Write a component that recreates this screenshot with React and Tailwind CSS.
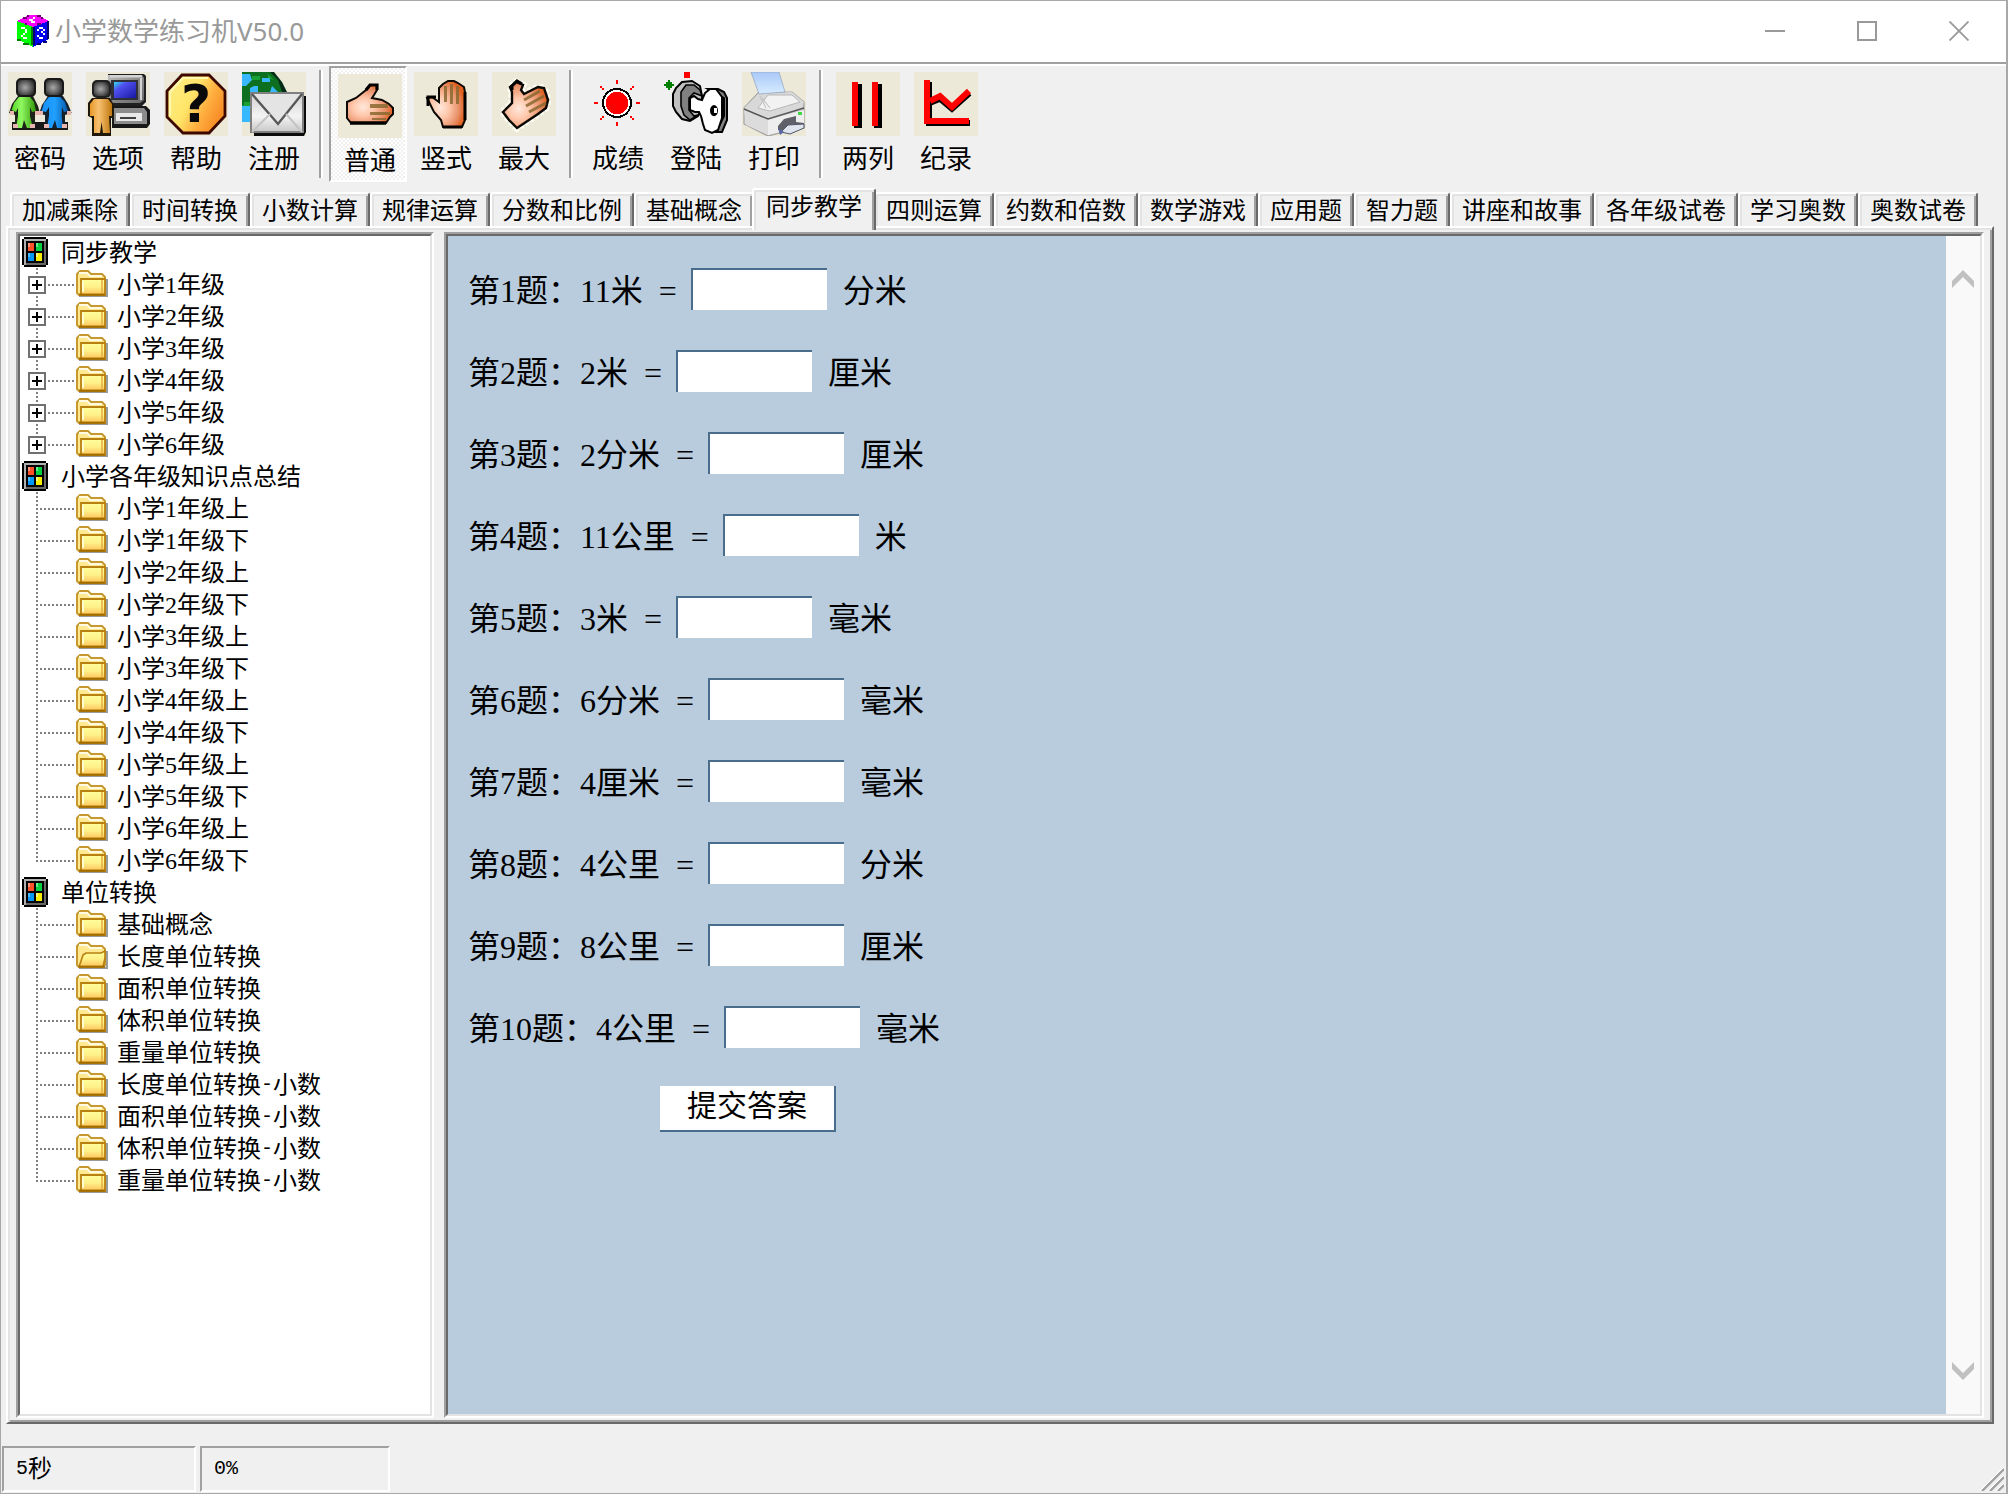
import React from "react";

const pixel = { shapeRendering: "crispEdges" };

function DiceIcon() {
  return (
    <svg viewBox="0 0 16 16" className="h-8 w-8 shrink-0" aria-hidden="true" style={pixel}>
      <path d="M0 3L4 1L6 0H10L12 1L16 3L8 6Z" fill="#ff00ff" />
      <path d="M0 3L8 6V16L6 15L0 12Z" fill="#00ff00" />
      <path d="M16 3L8 6V16L10 15L16 12Z" fill="#0000f0" />
      <path d="M6 2h2v1h-2zM7 3h2v1h-2zM8 1h1v1h-1z" fill="#fff" />
      <path d="M3 1h2v1h-2zM5 0h1v1h-1zM10 0h2v1h-2zM12 1h1v1h-1zM4 4h1v1h-1zM10 4h2v1h-2z" fill="#700070" />
      <path d="M2 6h2v1h-2zM4 7h1v2h-1zM3 9h1v1h-1zM2 10h1v1h-1zM3 11h2v1h-2z" fill="#fff" />
      <path d="M11 6h2v1h-2zM10 7h1v1h-1zM13 7h1v1h-1zM12 8h1v1h-1zM13 9h1v1h-1zM10 10h1v1h-1zM11 11h2v1h-2z" fill="#fff" />
      <path d="M7 6h1v9h-1zM0 12h2v1h-2zM3 14h3v1h-3z" fill="#008000" />
      <path d="M8 6h1v9h-1zM15 3h1v9h-1zM13 13h2v1h-2zM10 14h2v1h-2z" fill="#000070" />
    </svg>
  );
}

function IconDefs() {
  return (
    <svg className="absolute h-0 w-0" aria-hidden="true">
      <defs>
        <radialGradient id="head" cx="0.45" cy="0.5" r="0.6">
          <stop offset="0" stopColor="#a8a8a8" />
          <stop offset="0.5" stopColor="#686868" />
          <stop offset="1" stopColor="#202020" />
        </radialGradient>
        <linearGradient id="green"><stop offset="0" stopColor="#58d828" /><stop offset="0.4" stopColor="#90f860" /><stop offset="1" stopColor="#309808" /></linearGradient>
        <linearGradient id="blue"><stop offset="0" stopColor="#1890f8" /><stop offset="0.5" stopColor="#20a0ff" /><stop offset="1" stopColor="#0858a8" /></linearGradient>
        <linearGradient id="orange"><stop offset="0" stopColor="#e89828" /><stop offset="0.4" stopColor="#f8c070" /><stop offset="1" stopColor="#c07810" /></linearGradient>
        <linearGradient id="screen" x1="0" y1="0" x2="1" y2="1"><stop offset="0" stopColor="#30e0e8" /><stop offset="0.3" stopColor="#5050f0" /><stop offset="1" stopColor="#1818a0" /></linearGradient>
        <linearGradient id="metal" x1="0" y1="0" x2="1" y2="1"><stop offset="0" stopColor="#c0c0c0" /><stop offset="0.5" stopColor="#8a8a8a" /><stop offset="1" stopColor="#686868" /></linearGradient>
        <linearGradient id="gold" x1="0" y1="0" x2="1" y2="0.5"><stop offset="0" stopColor="#fff088" /><stop offset="0.5" stopColor="#ffe468" /><stop offset="0.75" stopColor="#ffb040" /><stop offset="1" stopColor="#f89028" /></linearGradient>
        <linearGradient id="envelope" x1="0" y1="0" x2="0" y2="1"><stop offset="0" stopColor="#d0d0d0" /><stop offset="0.6" stopColor="#f4f4f4" /><stop offset="1" stopColor="#c8c8c8" /></linearGradient>
        <radialGradient id="skin" cx="0.35" cy="0.58" r="0.65">
          <stop offset="0" stopColor="#ffe8dc" />
          <stop offset="0.35" stopColor="#ffc8ac" />
          <stop offset="0.75" stopColor="#e89068" />
          <stop offset="1" stopColor="#e06020" />
        </radialGradient>
        <linearGradient id="paper" x1="0" y1="0" x2="0" y2="1"><stop offset="0" stopColor="#a8c8f8" /><stop offset="1" stopColor="#d8ecff" /></linearGradient>
        <linearGradient id="printer" x1="0" y1="0" x2="1" y2="1"><stop offset="0" stopColor="#f4f4f4" /><stop offset="1" stopColor="#c0c0c0" /></linearGradient>
        <linearGradient id="folder" x1="0" y1="0" x2="0" y2="1"><stop offset="0" stopColor="#ffff9c" /><stop offset="0.5" stopColor="#fff088" /><stop offset="1" stopColor="#ffc058" /></linearGradient>
      </defs>
    </svg>
  );
}

function ToolIcon({ plain, children }) {
  return (
    <svg viewBox="0 0 32 32" className={plain ? "h-16 w-16" : "h-16 w-16 bg-[#ece9d8]"} aria-hidden="true">
      {children}
    </svg>
  );
}

function PasswordIcon() {
  return (
    <ToolIcon>
      <path d="M2 25H30V29H2Z" fill="#181818" />
      <path d="M5 12H12.500L15 17L16 21H13.500V28H3.500V21.500L0.500 20.500L2 16Z" fill="#1c2418" />
      <path d="M5.500 12.500H11L13 15L14 19.500L12 20L11 17.500V22L12.500 28H9.500L8 24L7 28H4L5 22V18L4 20L1.800 19L3 15.500Z" fill="url(#green)" />
      <path d="M20 12H27.500L30 16L31.800 20.500L28.500 21.500V28H18.500V21.500L15.500 21L17 16.500Z" fill="#14202c" />
      <path d="M20.500 12.500H26L28.500 15L30 19.500L28 20L27 17.500L26.800 22L27.500 28H24.500L23.500 24L22 28H19.500L20.500 22V17.500L19 20L16.800 19.500L18 15.500Z" fill="url(#blue)" />
      <path d="M1 19.500h2v2H1zM13.500 19.500h2v2H13.500zM15.500 19.500h2v2H15.500zM29.500 19.500h2v2H29.500zM2.500 26h2.500v2H2.500zM11 26h2.500v2H11zM18 26h2.500v2H18zM27 26h2.500v2H27z" fill="#e8b8b0" />
      <rect x="4.500" y="3.500" width="9" height="8.500" rx="2" fill="url(#head)" stroke="#181818" />
      <rect x="18.500" y="3.500" width="9" height="8.500" rx="2" fill="url(#head)" stroke="#181818" />
    </ToolIcon>
  );
}

function OptionsIcon() {
  return (
    <ToolIcon>
      <path d="M11 1H29L30 2V15L28 17H13L11 15Z" fill="#202020" />
      <path d="M11 1.500H28L29 3V14L27 15.500H13L11 13Z" fill="url(#metal)" />
      <path d="M12 1.500H28V2.800H12ZM27 3H28V14H27Z" fill="#d4d4d4" />
      <rect x="12.500" y="4" width="13.500" height="10" fill="#303038" />
      <rect x="14" y="5" width="11" height="8" fill="url(#screen)" />
      <path d="M13 17H30L32 19V26L30.500 28H13Z" fill="#181818" />
      <path d="M14 18H29L30.500 20V26H14Z" fill="#8c8c8c" />
      <path d="M15 20.500H28V24.500H15Z" fill="#e8e8e8" />
      <path d="M17 22.500H25V23.500H17Z" fill="#404040" />
      <path d="M3 13H12L14 16.500V23H12.500V32H3V23L1 22V15.500Z" fill="#201808" />
      <path d="M4 13.500H11L13 16V22H11.500L12 30.500H8.500L7.800 25L7 30.500H4V22H2V16Z" fill="url(#orange)" />
      <rect x="3.500" y="4.500" width="8.500" height="8" rx="2" fill="url(#head)" stroke="#202020" />
    </ToolIcon>
  );
}

function HelpIcon() {
  return (
    <ToolIcon>
      <path d="M9 1.500H22.500L30.500 9.500V22L22.500 30.500H9.500L1.500 22.500V9.500Z" fill="url(#gold)" stroke="#3c0800" strokeWidth="1.400" />
      <path d="M3 22V10L9.500 3H22" stroke="#fff8b0" fill="none" />
      <text x="16" y="25" textAnchor="middle" fontFamily="DejaVu Sans" fontWeight="bold" fontSize="26" fill="#0a0a0a">?</text>
    </ToolIcon>
  );
}

function RegisterIcon() {
  return (
    <ToolIcon>
      <path d="M0 0H16L20 5L23 11V25H0Z" fill="#052c18" />
      <path d="M0 0H14L18 4L20 10H8L4 14V18H0Z" fill="#0c7020" />
      <path d="M0 1H4L5 4L2 7H0ZM10 3H14V5H10ZM6 7H8V10H4V8ZM15 7L18 10H14ZM0 17L4 16V25H0Z" fill="#38b8ff" />
      <path d="M1 15H4V17H1ZM5 2H9V4H5ZM13 1L16 4L13 3Z" fill="#18a030" />
      <path d="M6 12H32V30L31 32H6Z" fill="#0c0c0c" />
      <rect x="4.500" y="10.500" width="26" height="19.500" fill="url(#envelope)" stroke="#808080" />
      <path d="M5 11L18 26L30 11" fill="#e4e4e4" stroke="#585858" strokeWidth="1.200" />
      <path d="M5 30L14 21M30 30L22 21" stroke="#c4c4c4" />
    </ToolIcon>
  );
}

function NormalIcon() {
  return (
    <ToolIcon>
      <path d="M4.500 14L9 12L14 8L16 5.500H19.500V8L18 10.500L17 12L22 13L25.500 15L27.500 17V20L26 21.500L24 24.500H6.500L4.500 22Z" fill="url(#skin)" stroke="#0c0804" strokeWidth="1" />
      <path d="M16 15H25V17H16ZM16 19H26V20.500H16ZM17 22H24V23H17Z" fill="#8a6830" opacity="0.850" />
      <path d="M14 8L16 5.500H19.500V8" fill="none" stroke="#000" strokeWidth="1.600" />
      <path d="M6 24.500H24" stroke="#000" strokeWidth="1.800" />
    </ToolIcon>
  );
}

function VerticalIcon() {
  return (
    <ToolIcon>
      <path d="M6.500 13L9 12.500L12.500 15V8L14.500 6L17 4.500H20L22 5.500L25 7.500L25.500 10V24L24 27.500H14.500L13.500 24L10 20L8.500 17Z" fill="url(#skin)" stroke="#0c0804" strokeWidth="1" />
      <path d="M15 7H16.500V15H15ZM18 6H19.500V16H18ZM21 7H22.500V16H21Z" fill="#8a6830" opacity="0.850" />
      <path d="M14.500 27.500H24M25.500 10V24M7 17V12.500H11" stroke="#000" strokeWidth="1.500" fill="none" />
    </ToolIcon>
  );
}

function MaximizeIcon() {
  return (
    <ToolIcon>
      <path d="M5.500 20L10 15.500V10L9 7.500L12 5L15.500 6.500L14.500 9L16 11L23 7.500L26 8L27 11L28 14L27 18L23 21L12.500 28L8.500 24Z" fill="none" stroke="#fffef4" strokeWidth="3.500" strokeDasharray="2 1" />
      <path d="M5.500 20L10 15.500V10L9 7.500L12 5L15.500 6.500L14.500 9L16 11L23 7.500L26 8L27 11L28 14L27 18L23 21L12.500 28L8.500 24Z" fill="url(#skin)" stroke="#0c0804" strokeWidth="1.200" />
      <path d="M16 14L24 9.500M17 17L26 12M18.500 20L27 15.500" stroke="#8a6830" strokeWidth="1.500" opacity="0.850" />
      <path d="M10 9V7L12.500 4.500L15 6" stroke="#000" strokeWidth="1.500" fill="none" />
    </ToolIcon>
  );
}

function ScoreIcon() {
  return (
    <ToolIcon plain>
      <circle cx="15.500" cy="15.500" r="7" fill="#fff" stroke="#000" style={pixel} />
      <circle cx="15.500" cy="15.500" r="5.600" fill="#f00" style={pixel} />
      <g fill="#f00" style={pixel}>
        <path d="M15 4h1v2h-1zM15 25h1v2h-1zM4 15h2v1h-2zM25 15h2v1h-2z" />
        <path d="M7 7h1v1h-1zM8 8h1v1h-1zM23 7h1v1h-1zM22 8h1v1h-1zM7 23h1v1h-1zM8 22h1v1h-1zM23 23h1v1h-1zM22 22h1v1h-1z" />
      </g>
    </ToolIcon>
  );
}

function LoginIcon() {
  return (
    <ToolIcon plain>
      <path d="M10 0h3v3h-3z" fill="#f00" />
      <path d="M2 4h1v1h1v1h1v1h-1v1h-1v1h-1v-1h-1v-1h-1v-1h1v-1h1z" fill="#008000" style={pixel} />
      <path d="M9 5L14 4.500L18 7L19 12V18L17 22L13 24.500L9 23.500L6 20L4.500 17V11L6 8Z" fill="#c0c0c0" stroke="#000" />
      <path d="M11 6.500H15L18 9L19 12L15 10.500L12.500 13V19L15 22L17 21.500L13 24L10 21.500L8.500 17L8.500 10Z" fill="#808080" stroke="#000" strokeWidth="0.800" />
      <path d="M22 8.500H27L30 10L31.500 13V24L29 30H26L30 22V13Z" fill="#808080" stroke="#000" />
      <path d="M13 13L15 12L17 13.500L19 14L20.500 10.500L23 8.500H26L29 12.500V23L27 29L24 30.500L20.500 29L19.500 26L18.500 22L17.500 20L15.500 20L13 19Z" fill="#fff" stroke="#000" />
      <ellipse cx="25" cy="19.300" rx="2" ry="2.800" fill="#000" />
      <path d="M25 18h1.500v2.500H25z" fill="#fff" />
    </ToolIcon>
  );
}

function PrintIcon() {
  return (
    <ToolIcon>
      <path d="M1 18L8 10.500L25 10L31 15V28L21 30L13 32L1 26Z" fill="url(#printer)" stroke="#a0a0a0" strokeWidth="0.600" />
      <path d="M1 18L8 11L25 10L31 15L29 19L13 22.500Z" fill="#d8d8d8" />
      <path d="M8 18L13 11.500H25L29 15L14 19.500Z" fill="#f2f2f2" stroke="#b8b8b8" strokeWidth="0.500" />
      <path d="M9 12L12 18M10 13L14 18" stroke="#c4c4c4" strokeWidth="0.600" />
      <path d="M4.500 0H18.500L21.500 10L8.500 11Z" fill="url(#paper)" stroke="#98a8c0" strokeWidth="0.400" />
      <path d="M1 19L13 24V31.500L2 26.500Z" fill="#dcdcdc" />
      <path d="M13 24L31 19V27L13 31.500Z" fill="#eeeeee" />
      <path d="M1 18.500L13 23.500L31 18" fill="none" stroke="#585858" strokeWidth="0.800" />
      <path d="M18 27L21 23.500L27 22V25L31 25.500V27L24 30L18 29Z" fill="#606068" />
      <path d="M19.500 30L23 26.500L31 26L31 28L24 31Z" fill="#dfe3ee" stroke="#505868" strokeWidth="0.500" />
      <path d="M18 28L21 30L19 31.500Z" fill="#5868a0" />
      <path d="M28 20h2v1.500h-2z" fill="#40d840" />
    </ToolIcon>
  );
}

function ColumnsIcon() {
  return (
    <ToolIcon>
      <path d="M9 6H13V28H9ZM19 6H23V28H19Z" fill="#000" />
      <path d="M8 5H11V27H8ZM18 5H21V27H18Z" fill="#f00" />
    </ToolIcon>
  );
}

function RecordIcon() {
  return (
    <ToolIcon>
      <g fill="none" strokeWidth="3">
        <path d="M7.500 5V25.500H28" stroke="#000" />
        <path d="M8 16L13 14L19 19L28 11" stroke="#000" strokeWidth="2" />
        <path d="M6.500 4V24.500H27.500" stroke="#f00" />
        <path d="M8 14.500L13 12L19 17.500L27.500 9.500" stroke="#f00" />
      </g>
    </ToolIcon>
  );
}

const toolGroups = [
  [["密码", PasswordIcon], ["选项", OptionsIcon], ["帮助", HelpIcon], ["注册", RegisterIcon]],
  [["普通", NormalIcon], ["竖式", VerticalIcon], ["最大", MaximizeIcon]],
  [["成绩", ScoreIcon], ["登陆", LoginIcon], ["打印", PrintIcon]],
  [["两列", ColumnsIcon], ["纪录", RecordIcon]],
];

const tabs = ["加减乘除", "时间转换", "小数计算", "规律运算", "分数和比例", "基础概念", "同步教学", "四则运算", "约数和倍数", "数学游戏", "应用题", "智力题", "讲座和故事", "各年级试卷", "学习奥数", "奥数试卷"];

const tree = [
  { label: "同步教学", expandable: true, items: ["小学1年级", "小学2年级", "小学3年级", "小学4年级", "小学5年级", "小学6年级"] },
  {
    label: "小学各年级知识点总结",
    items: ["小学1年级上", "小学1年级下", "小学2年级上", "小学2年级下", "小学3年级上", "小学3年级下", "小学4年级上", "小学4年级下", "小学5年级上", "小学5年级下", "小学6年级上", "小学6年级下"],
  },
  {
    label: "单位转换",
    items: ["基础概念", "长度单位转换", "面积单位转换", "体积单位转换", "重量单位转换", "长度单位转换-小数", "面积单位转换-小数", "体积单位转换-小数", "重量单位转换-小数"],
  },
];

const questions = [
  ["11米", "分米"],
  ["2米", "厘米"],
  ["2分米", "厘米"],
  ["11公里", "米"],
  ["3米", "毫米"],
  ["6分米", "毫米"],
  ["4厘米", "毫米"],
  ["4公里", "分米"],
  ["8公里", "厘米"],
  ["4公里", "毫米"],
];

function ToolButton({ label, Icon, pressed }) {
  return (
    <button
      type="button"
      aria-pressed={pressed}
      className={
        pressed
          ? "flex h-[116px] w-[78px] flex-col items-center border-2 border-t-[#a0a0a0] border-l-[#a0a0a0] border-r-white border-b-white bg-[conic-gradient(#fff_25%,#f0f0f0_0_50%,#fff_0_75%,#f0f0f0_0)] bg-[length:4px_4px] pt-1.5 pl-1"
          : "flex h-[116px] w-[78px] flex-col items-center pt-1.5"
      }
    >
      <Icon />
      <span className="mt-[3px] text-[26px] leading-9">{label}</span>
    </button>
  );
}

function RootIcon() {
  return (
    <svg viewBox="0 0 13 15" className="h-[30px] w-[26px] shrink-0" aria-hidden="true" style={pixel}>
      <path d="M1 0H12V1H13V14H12V15H1V14H0V1H1Z" fill="#000" />
      <path d="M1 1H12V14H1Z" fill="#686868" />
      <path d="M1 1H12V2H1ZM1 1H2V14H1Z" fill="#b0b0b0" />
      <path d="M2 2H11V13H2Z" fill="#000" />
      <path d="M3 3h3v4h-3z" fill="#ff5028" />
      <path d="M3 3h1v2h-1z" fill="#ff9878" />
      <path d="M7 3h3v4h-3z" fill="#00d040" />
      <path d="M7 3h1v2h-1z" fill="#60f090" />
      <path d="M3 8h3v4h-3z" fill="#0098f8" />
      <path d="M3 8h1v2h-1z" fill="#50b8ff" />
      <path d="M7 8h3v4h-3z" fill="#f8f000" />
      <path d="M7 8h1v2h-1z" fill="#fff880" />
    </svg>
  );
}

function FolderIcon({ open }) {
  return (
    <svg viewBox="0 0 16 14" className="h-7 w-8 shrink-0" aria-hidden="true">
      <path d="M1.500 12.500H15V4.500H16V13.500H1.500Z" fill="#707070" opacity="0.700" />
      <path d="M0.500 2L2 0.500H6L7.500 2H13L14.500 3.500V11.500L13.500 12.500H1.500L0.500 11.500Z" fill="#ffe890" stroke="#c89830" />
      <path d="M1.500 1.500H5.500L7 3H13" stroke="#fffbe0" fill="none" />
      {open ? (
        <path d="M3.500 6.500L5 5.500H12.500L14.500 4.500V8L13.500 12.500H1.500Z" fill="url(#folder)" stroke="#b88010" strokeWidth="0.800" />
      ) : (
        <>
          <path d="M2.500 4.500H14.500V12.500H2.500Z" fill="url(#folder)" stroke="#b88010" strokeWidth="0.900" />
          <path d="M3.500 5.500V11" stroke="#fffcd0" />
          <path d="M13 5V12" stroke="#e8b040" strokeWidth="0.800" />
        </>
      )}
      <path d="M1.500 12.300H14.500" stroke="#a06c00" />
    </svg>
  );
}

function Connector({ last }) {
  return (
    <svg viewBox="0 0 56 32" className="h-8 w-14 shrink-0" aria-hidden="true" fill="none" stroke="#808080" strokeWidth="2" strokeDasharray="2 2" style={pixel}>
      <path d={last ? "M17 0V18" : "M17 0V32"} />
      <path d="M20 17H56" />
    </svg>
  );
}

function ItemLabel({ text }) {
  const [name, suffix] = text.split("-");
  return (
    <span className="ml-[9px] flex items-center pt-0.5 whitespace-nowrap">
      {name}
      {suffix && <span className="font-['Liberation_Mono',monospace] text-xl">-</span>}
      {suffix}
    </span>
  );
}

function TreeGroup({ group }) {
  return (
    <li>
      <div className="flex h-8 items-center gap-[13px] pl-0.5">
        <RootIcon />
        <span className="pt-0.5">{group.label}</span>
      </div>
      <ul>
        {group.items.map((item, i) => (
          <li key={item} className="relative flex h-8 items-center">
            <Connector last={i === group.items.length - 1} />
            {group.expandable && (
              <button type="button" aria-label={"展开" + item} className="absolute top-2 left-2 grid h-[18px] w-[18px] place-items-center border-2 border-[#707070] bg-white">
                <svg viewBox="0 0 10 10" className="h-2.5 w-2.5" aria-hidden="true" stroke="#000" strokeWidth="2" style={pixel}>
                  <path d="M0 5H10M5 0V10" />
                </svg>
              </button>
            )}
            <FolderIcon open={item === "长度单位转换"} />
            <ItemLabel text={item} />
          </li>
        ))}
      </ul>
    </li>
  );
}

function Question({ index, quantity, unit }) {
  return (
    <li className="flex h-[42px] items-center gap-4 whitespace-nowrap">
      <label htmlFor={"answer" + index} className="pt-1">
        第{index}题：{quantity}
      </label>
      <span className="w-4 pt-1 text-center">=</span>
      <input
        id={"answer" + index}
        type="text"
        className="h-[42px] w-[136px] border-t-2 border-l-2 border-[#4a6d8c] bg-white px-1 outline-none"
      />
      <span className="pt-1">{unit}</span>
    </li>
  );
}

function ScrollButton({ label, d }) {
  return (
    <button type="button" aria-label={label} className="grid h-[86px] w-full place-items-center">
      <svg viewBox="0 0 22 18" className="h-[18px] w-[22px]" aria-hidden="true">
        <path d={d} fill="#c0c0c0" />
      </svg>
    </button>
  );
}

function TitleBar() {
  return (
    <header className="flex h-[61px] shrink-0 items-center bg-white pr-px pb-0.5 text-[#999]">
      <div className="flex flex-1 items-center gap-1.5 pl-4">
        <DiceIcon />
        <h1 className="font-['Noto_Sans','Noto_Sans_CJK_SC',sans-serif] text-[26px] leading-9">小学数学练习机V50.0</h1>
      </div>
      <button type="button" aria-label="最小化" className="grid h-full w-[92px] place-items-center">
        <span className="h-0.5 w-5 bg-[#999]" />
      </button>
      <button type="button" aria-label="最大化" className="grid h-full w-[92px] place-items-center">
        <span className="h-5 w-5 border-2 border-[#999]" />
      </button>
      <button type="button" aria-label="关闭" className="grid h-full w-[92px] place-items-center">
        <svg viewBox="0 0 20 20" className="h-5 w-5" aria-hidden="true" stroke="#999" strokeWidth="1.800">
          <path d="M0.500 0.500L19.500 19.500M19.500 0.500L0.500 19.500" />
        </svg>
      </button>
    </header>
  );
}

export default function App() {
  return (
    <div className="flex min-h-screen flex-col border-t border-r-2 border-b border-l border-[#a8a8a8] bg-[#f0f0f0] font-['Liberation_Serif','Noto_Sans_CJK_SC',sans-serif] text-2xl text-black">
      <IconDefs />
      <div className="font-['Noto_Sans_CJK_SC',sans-serif]">
        <TitleBar />
        <div className="h-1 border-t-2 border-b-2 border-t-[#a0a0a0] border-b-white" />
        <div role="toolbar" className="flex">
          {toolGroups.map((group, g) => (
            <React.Fragment key={g}>
              {g > 0 && (
                <div className="w-4 px-1.5 pt-1">
                  <div className="h-[108px] w-1 border-r-2 border-l-2 border-r-white border-l-[#a0a0a0]" />
                </div>
              )}
              {group.map(([label, Icon]) => (
                <ToolButton key={label} label={label} Icon={Icon} pressed={label === "普通"} />
              ))}
            </React.Fragment>
          ))}
        </div>
      </div>

      <div role="tablist" className="mt-1.5 flex h-[38px] items-end pl-[9px]">
        {tabs.map((tab) => {
          const selected = tab === "同步教学";
          return (
            <button
              key={tab}
              type="button"
              role="tab"
              aria-selected={selected}
              className={
                selected
                  ? "relative z-10 -mx-0.5 -mb-1 flex h-[42px] items-center rounded-t-[3px] border-t-2 border-r-2 border-l-2 border-t-white border-r-[#696969] border-l-white bg-[#f0f0f0] px-3 pb-1.5 whitespace-nowrap shadow-[inset_2px_2px_0_#e3e3e3,inset_-2px_0_0_#a0a0a0]"
                  : "flex h-[34px] items-center rounded-t-[3px] border-t-2 border-r-2 border-l-2 border-t-white border-r-[#696969] border-l-white px-2.5 pt-0.5 whitespace-nowrap shadow-[inset_2px_2px_0_#e3e3e3,inset_-2px_0_0_#a0a0a0]"
              }
            >
              {tab}
            </button>
          );
        })}
      </div>

      <div className="mr-3 ml-[5px] flex flex-1 border-2 border-t-white border-r-[#696969] border-b-[#696969] border-l-white shadow-[inset_2px_2px_0_#e3e3e3,inset_-2px_-2px_0_#a0a0a0]">
        <main className="flex flex-1 gap-2.5 px-2 py-1">
          <nav className="w-[418px] shrink-0 border-2 border-t-[#a0a0a0] border-r-white border-b-white border-l-[#a0a0a0] bg-white">
            <ul className="h-full border-2 border-t-[#696969] border-r-[#e3e3e3] border-b-[#e3e3e3] border-l-[#696969]">
              {tree.map((group) => (
                <TreeGroup key={group.label} group={group} />
              ))}
            </ul>
          </nav>
          <section className="flex flex-1 border-2 border-t-[#a0a0a0] border-r-white border-b-white border-l-[#a0a0a0]">
            <div className="flex flex-1 border-2 border-t-[#696969] border-r-[#e3e3e3] border-b-[#e3e3e3] border-l-[#696969]">
              <form className="flex-1 bg-[#b8ccdd] pt-8 pl-5 text-[32px] leading-10">
                <ol className="flex flex-col gap-10">
                  {questions.map(([quantity, unit], i) => (
                    <Question key={i} index={i + 1} quantity={quantity} unit={unit} />
                  ))}
                </ol>
                <button type="button" className="mt-[38px] ml-48 flex h-[46px] w-44 items-center justify-center border-r-2 border-b-2 border-[#4a6d8c] bg-white pb-1 text-3xl">
                  提交答案
                </button>
              </form>
              <div className="flex w-[34px] flex-col justify-between bg-[#f9f9f9]">
                <ScrollButton label="向上滚动" d="M11 0L22 11V18L11 7L0 18V11Z" />
                <ScrollButton label="向下滚动" d="M11 18L22 7V0L11 11L0 0V7Z" />
              </div>
            </div>
          </section>
        </main>
      </div>

      <footer className="mt-[22px] flex h-[47px] items-start gap-1 pl-px">
        <div className="flex h-[46px] w-[194px] items-center border-2 border-t-[#a0a0a0] border-r-white border-b-white border-l-[#a0a0a0] pl-3">
          <span className="font-['Liberation_Mono',monospace] text-xl">5</span>秒
        </div>
        <div className="flex h-[46px] w-[190px] items-center border-2 border-t-[#a0a0a0] border-r-white border-b-white border-l-[#a0a0a0] pl-3 font-['Liberation_Mono',monospace] text-xl">0%</div>
        <div className="flex flex-1 justify-end self-end pr-0.5 pb-0.5">
          <svg viewBox="0 0 12 12" className="h-6 w-6" aria-hidden="true" stroke="#a0a0a0" strokeWidth="1.200">
            <path d="M1 12L12 1M5 12L12 5M9 12L12 9" />
            <path d="M0 12L12 0M4 12L12 4M8 12L12 8" stroke="#fff" strokeWidth="0.500" />
          </svg>
        </div>
      </footer>
    </div>
  );
}
